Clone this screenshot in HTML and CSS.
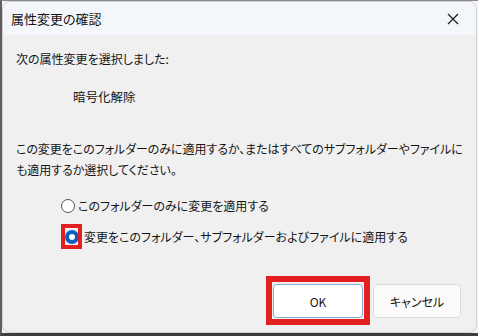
FILE: index.html
```html
<!DOCTYPE html>
<html lang="ja">
<head>
<meta charset="utf-8">
<link rel="stylesheet" href="styles.css">
</head>
<body>
<div class="frame">
  <div class="dialog">
    <div class="titlebar">
      <span class="title">属性変更の確認</span>
      <svg class="close" width="12" height="12" viewBox="0 0 12 12"><path d="M1 1L11 11M11 1L1 11" stroke="#1a1a1a" stroke-width="1.2" fill="none"/></svg>
    </div>
    <div class="content">
      <p class="line">次の属性変更を選択しました:</p>
      <p class="line attr">暗号化解除</p>
      <p class="para">この変更をこのフォルダーのみに適用するか、またはすべてのサブフォルダーやファイルにも適用するか選択してください。</p>
      <div class="options">
        <label class="opt"><span class="radio"></span>このフォルダーのみに変更を適用する</label>
        <label class="opt opt-on"><span class="radio on"><span class="mark mark-radio"></span></span>変更をこのフォルダー、サブフォルダーおよびファイルに適用する</label>
      </div>
      <div class="buttons">
        <div class="btnwrap"><button class="btn primary">OK</button><span class="mark mark-btn"></span></div>
        <button class="btn">キャンセル</button>
      </div>
    </div>
  </div>
</div>
</body>
</html>
```
FILE: styles.css
```css
html, body {
  margin: 0;
  padding: 0;
  width: 478px;
  height: 336px;
  overflow: hidden;
  background: #f4f4f4;
}
.frame {
  box-sizing: border-box;
  height: 336px;
  border-left: 2px solid #5e5e5e;
  border-top: 1px solid #8a8a8a;
  border-bottom: 3px solid #3e3e3e;
  padding-right: 1px;
}
.dialog {
  box-sizing: border-box;
  height: 100%;
  background: #f0f0f0;
  border: 1px solid #cfcfcf;
  border-radius: 8px;
  overflow: hidden;
  display: flex;
  flex-direction: column;
  font-family: "Noto Sans CJK JP", "Noto Sans", sans-serif;
  font-feature-settings: "palt";
  color: #151515;
  font-size: 12px;
}
.titlebar {
  height: 33px;
  flex: none;
  background: #f3f6fb;
  display: flex;
  align-items: center;
  justify-content: space-between;
  padding: 0 17px 0 8px;
}
.title {
  font-size: 13px;
}
.content {
  padding: 14px 8px 0 13px;
  display: flex;
  flex-direction: column;
}
.line {
  margin: 0;
  line-height: 20px;
}
.attr {
  margin-top: 18px;
  padding-left: 57px;
  font-size: 12.5px;
}
.para {
  margin: 31px 0 0;
  line-height: 21px;
  letter-spacing: -0.05px;
}
.options {
  margin-top: 16px;
  padding-left: 45px;
  display: flex;
  flex-direction: column;
  gap: 11px;
}
.opt {
  display: flex;
  align-items: center;
  line-height: 20px;
  gap: 3px;
}
.opt-on {
  gap: 5px;
}
.radio {
  position: relative;
  box-sizing: border-box;
  width: 14px;
  height: 14px;
  border-radius: 50%;
  border: 1px solid #555;
  background: #fff;
  flex: none;
}
.radio.on {
  margin-left: 4px;
  border: 4px solid #0a5fc4;
  background: #fff;
}
.mark {
  position: absolute;
  border-style: solid;
  border-color: #e3201f;
}
.mark-radio {
  left: -8px;
  top: -10px;
  width: 13px;
  height: 17px;
  border-width: 4px;
}
.buttons {
  margin-top: 37px;
  display: flex;
  justify-content: flex-end;
  gap: 10px;
  padding-right: 7px;
}
.btnwrap {
  position: relative;
  display: flex;
}
.btn {
  box-sizing: border-box;
  height: 34px;
  width: 88px;
  font-family: inherit;
  font-feature-settings: "palt";
  font-size: 12px;
  color: #151515;
  background: #fbfbfb;
  border: 1px solid #dcdcdc;
  border-radius: 4px;
}
.btn.primary {
  width: 90px;
  background: #fff;
  border: 1px solid #86acd6;
}
.mark-btn {
  left: -7px;
  top: -8px;
  right: -7px;
  bottom: -7px;
  border-width: 6px;
}
```
